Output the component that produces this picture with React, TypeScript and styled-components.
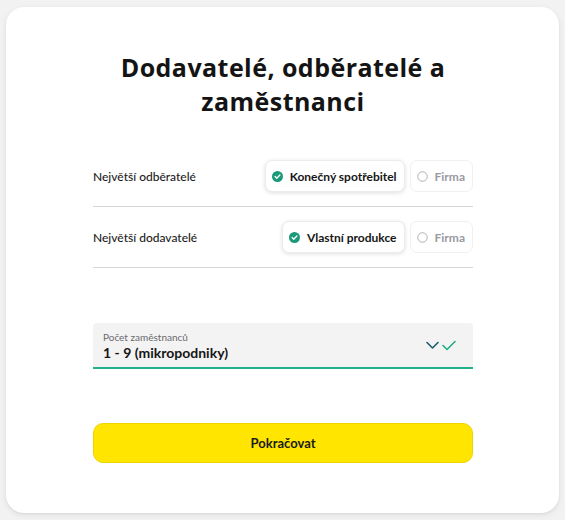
import React, { useState } from 'react'
import styled, { createGlobalStyle } from 'styled-components'

const GlobalStyle = createGlobalStyle`
  html, body {
    margin: 0;
    padding: 0;
    background: #f2f2f3;
    font-family: Lato, 'Open Sans', Arial, sans-serif;
    color: #1a1a1a;
  }
`

interface IOption {
  id: string
  label: string
}

interface IRowProps {
  label: string
  options: IOption[]
  value: string
  onChange: (id: string) => void
}

const CheckDot = () => (
  <svg width="11" height="11" viewBox="0 0 12 12">
    <circle cx="6" cy="6" r="6" fill="#1a9a78" />
    <path d="M3.4 6.1 L5.2 7.8 L8.6 4.4" fill="none" stroke="#fff" strokeWidth="1.5" strokeLinecap="round" strokeLinejoin="round" />
  </svg>
)

const EmptyDot = () => (
  <svg width="11" height="11" viewBox="0 0 12 12">
    <circle cx="6" cy="6" r="5.2" fill="none" stroke="#a8a8ae" strokeWidth="1" />
  </svg>
)

const ChoiceRow = ({ label, options, value, onChange }: IRowProps) => (
  <Row>
    <RowLabel>{label}</RowLabel>
    <Pills>
      {options.map(option => {
        const active = option.id === value
        return (
          <Pill key={option.id} active={active} onClick={() => onChange(option.id)}>
            {active ? <CheckDot /> : <EmptyDot />}
            {option.label}
          </Pill>
        )
      })}
    </Pills>
  </Row>
)

export default function App() {
  const [buyers, setBuyers] = useState('consumer')
  const [suppliers, setSuppliers] = useState('own')

  return (
    <>
      <GlobalStyle />
      <Page>
        <Card>
          <Title>
            Dodavatelé, odběratelé a
            <br />
            zaměstnanci
          </Title>
          <Rows>
            <ChoiceRow
              label="Největší odběratelé"
              options={[
                { id: 'consumer', label: 'Konečný spotřebitel' },
                { id: 'company', label: 'Firma' }
              ]}
              value={buyers}
              onChange={setBuyers}
            />
            <ChoiceRow
              label="Největší dodavatelé"
              options={[
                { id: 'own', label: 'Vlastní produkce' },
                { id: 'company', label: 'Firma' }
              ]}
              value={suppliers}
              onChange={setSuppliers}
            />
          </Rows>
          <Select>
            <SelectText>
              <SelectLabel>Počet zaměstnanců</SelectLabel>
              <SelectValue>1 - 9 (mikropodniky)</SelectValue>
            </SelectText>
            <SelectIcons>
              <svg width="13" height="9" viewBox="0 0 13 9">
                <path d="M1 1.5 L6.5 7 L12 1.5" fill="none" stroke="#1d5d72" strokeWidth="1.6" strokeLinecap="round" strokeLinejoin="round" />
              </svg>
              <svg width="14" height="11" viewBox="0 0 14 11">
                <path d="M1 5.5 L5 9.5 L13 1.5" fill="none" stroke="#20ad88" strokeWidth="1.6" strokeLinecap="round" strokeLinejoin="round" />
              </svg>
            </SelectIcons>
          </Select>
          <Button>Pokračovat</Button>
        </Card>
      </Page>
    </>
  )
}

const Page = styled.div`
  width: 565px;
  height: 520px;
  padding: 7px 6px 0;
  box-sizing: border-box;
  overflow: hidden;
`

const Card = styled.div`
  box-sizing: border-box;
  width: 553px;
  height: 506px;
  padding: 43px 86px 0 87px;
  background: #fff;
  border-radius: 18px;
  box-shadow: 0 2px 6px rgba(0, 0, 0, 0.08), 0 1px 2px rgba(0, 0, 0, 0.05);
  display: flex;
  flex-direction: column;
`

const Title = styled.h1`
  margin: 0 0 28px;
  text-align: center;
  font-family: 'Open Sans', Lato, sans-serif;
  font-size: 25px;
  letter-spacing: 0.45px;
  line-height: 34px;
  font-weight: 700;
  color: #141414;
`

const Rows = styled.div`
  display: flex;
  flex-direction: column;
`

const Row = styled.div`
  height: 60px;
  display: flex;
  align-items: center;
  justify-content: space-between;
  border-bottom: 1px solid #d6d6d8;
`

const RowLabel = styled.span`
  font-size: 12px;
  font-weight: 500;
  color: #1c1c1c;
`

const Pills = styled.div`
  display: flex;
  gap: 5px;
`

const Pill = styled.button<{ active: boolean }>`
  height: 32px;
  display: flex;
  align-items: center;
  gap: 7px;
  padding: 0 7px 0 6px;
  border: 1px solid ${p => (p.active ? '#ececec' : '#f0f0f0')};
  border-radius: 7px;
  background: #fff;
  box-shadow: ${p => (p.active ? '0 1px 4px rgba(0, 0, 0, 0.13)' : 'none')};
  font-family: inherit;
  font-size: 12px;
  font-weight: 700;
  color: ${p => (p.active ? '#161616' : '#9a9aa2')};
  cursor: pointer;
`

const Select = styled.div`
  margin-top: 55px;
  height: 44px;
  display: flex;
  align-items: center;
  justify-content: space-between;
  padding: 0 17px 0 10px;
  background: #f3f3f3;
  border-radius: 4px 4px 0 0;
  border-bottom: 2px solid #1fb08c;
`

const SelectText = styled.div`
  display: flex;
  flex-direction: column;
  padding-top: 2px;
`

const SelectLabel = styled.span`
  font-size: 10px;
  line-height: 13px;
  color: #6a6a6e;
`

const SelectValue = styled.span`
  font-size: 14px;
  line-height: 17px;
  font-weight: 700;
  color: #161616;
`

const SelectIcons = styled.div`
  display: flex;
  align-items: center;
  gap: 3px;
`

const Button = styled.button`
  margin-top: 54px;
  height: 40px;
  border: 1px solid #efd400;
  border-radius: 10px;
  background: #ffe500;
  font-family: inherit;
  font-size: 13px;
  font-weight: 700;
  color: #1a1a1a;
  cursor: pointer;
`
